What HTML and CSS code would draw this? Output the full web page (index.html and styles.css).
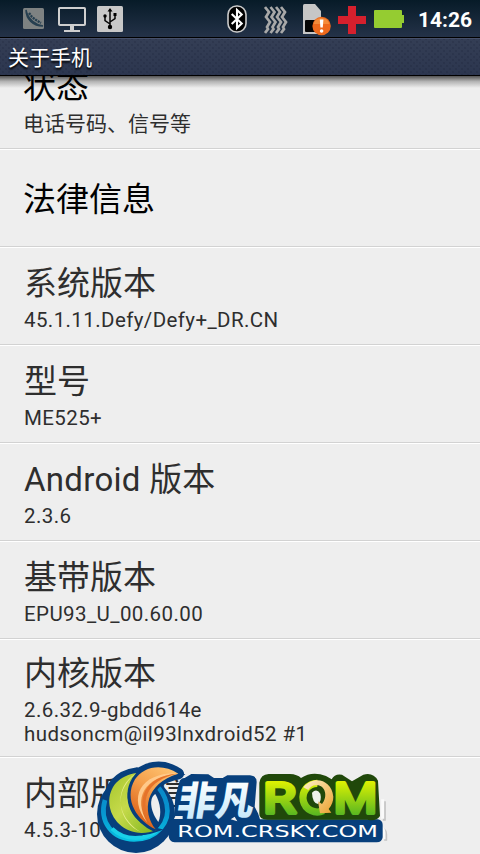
FILE: index.html
```html
<!DOCTYPE html>
<html lang="zh-CN">
<head>
  <meta charset="UTF-8" />
  <meta name="viewport" content="width=device-width, initial-scale=1" />
  <title>关于手机</title>
  <link rel="stylesheet" href="styles.css">
</head>
<body>
  <div class="status-bar">
    <div class="status-left">
      <svg class="icon-app" width="21" height="21" viewBox="0 0 21 21">
        <rect width="21" height="21" rx="1.5" fill="#7e8282"/>
        <path d="M3 2C3 11 10 18 20 18C13 17 5 12 3 2Z" fill="#263f50" stroke="#263f50" stroke-width="1.500"/>
        <path d="M6 5l3 4 4 3 5 3" stroke="#263f50" stroke-width="2.400" stroke-dasharray="2.200 .8" fill="none"/>
      </svg>
      <svg class="icon-screen" width="28" height="26" viewBox="0 0 28 26">
        <rect x="1" y="1" width="26" height="17" rx=".8" fill="none" stroke="#cfcfcf" stroke-width="2"/>
        <path d="M12 18h4v5h6v2H6v-2h6z" fill="#cfcfcf"/>
      </svg>
      <svg class="icon-usb" width="26" height="26" viewBox="0 0 26 26">
        <rect width="26" height="26" rx="1.500" fill="#c8c8c8"/>
        <path d="M13 3v18M13 18L8 14.500V10M13 16l5-3.500V9" stroke="#050505" stroke-width="1.500" fill="none"/>
        <path d="M10.500 5.500L13 2l2.500 3.500z"/>
        <circle cx="13" cy="21" r="2.200"/>
        <circle cx="8" cy="10" r="1.700"/>
        <rect x="16.500" y="7" width="3" height="3"/>
      </svg>
    </div>
    <div class="status-right">
      <svg class="icon-bt" width="20" height="28" viewBox="0 0 20 28">
        <rect x="1" y="1" width="18" height="26" rx="8.500" fill="#000" stroke="#cbcbcb" stroke-width="1.600"/>
        <path d="M4.700 9l10 9.500-4.700 4.500V5l4.700 4.500-10 9.500" fill="none" stroke="#fff" stroke-width="2.100"/>
      </svg>
      <svg class="icon-vibrate" width="24" height="28" viewBox="0 0 24 28">
        <g fill="none" stroke="#a8a8a8" stroke-width="2.700">
          <path d="M1 1l4 5-3 5 4 5-3 5 1 2-3 4"/>
          <path d="M6.500 1l4 5-3 5 4 5-3 5 1 2-3 4"/>
          <path d="M12 1l4 5-3 5 4 5-3 5 1 2-3 4"/>
          <path d="M17 1l4 5-3 5 4 5-3 5 1 2-3 4"/>
        </g>
      </svg>
      <svg class="icon-sim" width="28" height="32" viewBox="0 0 28 32">
        <path d="M0 1.500Q0 0 1.500 0H12l6 7v23H0z" fill="#c6c6c6"/>
        <rect x="2" y="16" width="13" height="12" rx="1" fill="#050505"/>
        <circle cx="18.600" cy="22" r="9.200" fill="#ee691c"/>
        <path d="M10.500 20a8.300 8.300 0 0 1 16 0z" fill="#f58b39"/>
        <path d="M16.800 15.500h3.600l-.6 8h-2.400z" fill="#fff"/>
        <circle cx="18.600" cy="27" r="1.800" fill="#fff"/>
      </svg>
      <svg class="icon-plus" width="28" height="28" viewBox="0 0 28 28">
        <path d="M10 0h8v10h10v8H18v10h-8V18H0v-8h10z" fill="#d6202d"/>
      </svg>
      <svg class="icon-battery" width="30" height="18" viewBox="0 0 30 18">
        <path d="M1 0h26q1 0 1 1v4h2v8h-2v4q0 1-1 1H1q-1 0-1-1V1q0-1 1-1z" fill="#95cc31"/>
      </svg>
      <span class="clock">14:26</span>
    </div>
  </div>

  <div class="title-bar">关于手机</div>

  <div class="list">
    <div class="row row-first enabled">
      <div class="name">状态</div>
      <div class="summary cjk">电话号码、信号等</div>
    </div>
    <div class="row row-single enabled">
      <div class="name">法律信息</div>
    </div>
    <div class="row">
      <div class="name">系统版本</div>
      <div class="summary">45.1.11.Defy/Defy+_DR.CN</div>
    </div>
    <div class="row">
      <div class="name">型号</div>
      <div class="summary">ME525+</div>
    </div>
    <div class="row">
      <div class="name"><span class="latin">Android </span>版本</div>
      <div class="summary">2.3.6</div>
    </div>
    <div class="row">
      <div class="name">基带版本</div>
      <div class="summary">EPU93_U_00.60.00</div>
    </div>
    <div class="row row-tall">
      <div class="name">内核版本</div>
      <div class="summary">2.6.32.9-gbdd614e<br>hudsoncm@il93lnxdroid52 #1</div>
    </div>
    <div class="row">
      <div class="name">内部版本信息</div>
      <div class="summary">4.5.3-10</div>
    </div>
  </div>

  <svg class="watermark" width="310" height="104" viewBox="0 0 930 312">
    <defs>
      <linearGradient id="green" x1="0" y1="0" x2="1" y2="1">
        <stop offset="0" stop-color="#a5c62c"/>
        <stop offset=".45" stop-color="#c6da4b"/>
        <stop offset="1" stop-color="#7fb51c"/>
      </linearGradient>
      <linearGradient id="orange" x1=".9" y1="0" x2=".4" y2="1">
        <stop offset="0" stop-color="#ffc675"/>
        <stop offset=".45" stop-color="#f5a04c"/>
        <stop offset="1" stop-color="#d95f18"/>
      </linearGradient>
      <linearGradient id="cyan" x1="0" y1="0" x2="0" y2="1">
        <stop offset="0" stop-color="#0a86c8"/>
        <stop offset=".5" stop-color="#0795d0"/>
        <stop offset="1" stop-color="#08c0e2"/>
      </linearGradient>
      <linearGradient id="ice" x1="0" y1="0" x2="0" y2="1">
        <stop offset=".2" stop-color="#fff"/>
        <stop offset="1" stop-color="#bde4fa"/>
      </linearGradient>
      <linearGradient id="lime" gradientUnits="userSpaceOnUse" x1="0" y1="88" x2="0" y2="198">
        <stop offset="0" stop-color="#e6f500"/>
        <stop offset="1" stop-color="#55b522"/>
      </linearGradient>
      <linearGradient id="gold" x1="0" y1="0" x2="1" y2="1">
        <stop offset="0" stop-color="#fff1c7"/>
        <stop offset="1" stop-color="#eba12f"/>
      </linearGradient>
    </defs>
    <!-- pale marks showing past the right edge of the logo -->
    <path d="M883 154v58M870 241q17-6 17 11v20" stroke="#c4c4c4" stroke-width="9" fill="none"/>
    <path d="M878 148v58M866 236q16-5 16 12v20" stroke="#fafafa" stroke-width="9" fill="none"/>
    <!-- emblem -->
    <circle cx="138" cy="192" r="117" fill="#073f7c"/>
    <g fill="#073f7c" stroke="#073f7c" stroke-width="34" stroke-linejoin="round">
      <path d="M140 69C88 76 52 112 58 165L130 160Z"/>
      <path d="M265 71C215 38 160 50 135 88L150 150Q180 90 265 71Z"/>
    </g>
    <path d="M45 150C26 216 68 268 132 268C202 268 242 216 230 162C224 136 212 118 198 106" fill="none" stroke="url(#cyan)" stroke-width="14"/>
    <path d="M66 236C88 258 112 264 136 264C162 264 188 254 205 238" fill="none" stroke="#19d0e8" stroke-width="12"/>
    <path d="M140 69C88 76 56 110 58 160C62 220 125 270 200 240C132 225 78 150 140 69Z" fill="url(#green)" stroke="#073f7c" stroke-width="12" paint-order="stroke"/>
    <path d="M137 71C74 110 74 198 152 246C90 218 62 130 137 71Z" fill="#e8ee8c"/>
    <path d="M130 84C86 144 104 210 170 246C108 212 84 150 130 84Z" fill="#92bb25"/>
    <path d="M265 71C215 38 160 50 135 88C98 150 145 215 197 238C155 185 165 100 265 71Z" fill="url(#orange)" stroke="#073f7c" stroke-width="18" paint-order="stroke"/>
    <path d="M263 70C155 66 110 140 172 218C130 145 160 82 263 70Z" fill="#ffc98a"/>
    <path d="M263 71C165 76 126 150 188 230C142 155 170 90 263 71Z" fill="#e5732a"/>
    <path d="M196 132C178 142 178 180 205 216C215 192 212 160 196 132Z" fill="#eee"/>
    <!-- dark backing of the wordmark -->
    <path fill="#073f7c" d="M252 206L256 140 268 96Q271 85 284 84L304 72 355 73 372 84H398L412 76 480 76Q500 78 500 96L494 170 504 190 510 208H864Q878 212 878 224V262Q876 278 858 277H254Q234 276 236 250V218Q240 207 252 206Z"/>
    <path fill="#eee" d="M256 198h22v9h-26zM422 208l12-8 8 14z"/>
    <g class="hanzi" fill="url(#ice)" transform="skewX(-9)">
      <text x="288" y="194" textLength="230" lengthAdjust="spacingAndGlyphs">非凡</text>
    </g>
    <path d="M508 98Q512 73 536 72H600Q622 73 633 84Q666 62 708 78L725 88Q734 70 756 74L786 94L820 74Q850 66 864 92L870 198Q858 216 832 209H538Q506 211 508 190Z" fill="#20480a"/>
    <g class="rom" fill="url(#lime)" stroke="url(#lime)">
      <text x="520" y="190" textLength="98" lengthAdjust="spacingAndGlyphs">R</text>
      <text x="731" y="190" textLength="130" lengthAdjust="spacingAndGlyphs">M</text>
    </g>
    <circle cx="678" cy="143" r="38" fill="#20480a"/>
    <path d="M666 128q14-14 25 3 5 20-7 31-17-3-18-34z" fill="#eef1e9"/>
    <path d="M700 182A43 43 0 1 1 682 100" fill="none" stroke="url(#lime)" stroke-width="22"/>
    <path d="M640 112C670 75 725 88 730 140Q730 160 716 177L724 188L690 190L684 154L696 162C716 138 704 104 679 106Q665 104 655 120Z" fill="url(#gold)"/>
    <text class="site" x="262" y="260" textLength="602" lengthAdjust="spacingAndGlyphs" fill="#fff">ROM.CRSKY.COM</text>
  </svg>
</body>
</html>
```
FILE: styles.css
```css
body {
  margin: 0;
  width: 480px;
  height: 854px;
  overflow: hidden;
  background: #eee;
  font-family: Roboto, "Noto Sans CJK SC", sans-serif;
  position: relative;
}

svg {
  display: block;
  flex: none;
}

.status-bar {
  display: flex;
  justify-content: space-between;
  box-sizing: border-box;
  height: 38px;
  padding: 0 9px 0 23px;
  background: linear-gradient(#071b28, #243248);
  border-bottom: 1px solid #000;
}

.status-left,
.status-right {
  display: flex;
  align-items: flex-start;
}

.icon-app {
  margin-top: 8px;
}

.icon-screen {
  margin: 7px 11px 0 14px;
}

.icon-usb {
  margin-top: 6px;
}

.icon-bt {
  margin-top: 5px;
}

.icon-vibrate {
  margin: 6px 15px 0 17px;
}

.icon-sim {
  margin-top: 4px;
}

.icon-plus {
  margin: 6px 8px 0 7px;
}

.icon-battery {
  margin-top: 10px;
}

.clock {
  width: 53px;
  margin-left: 14px;
  line-height: 40px;
  font-size: 21px;
  font-weight: bold;
  color: #fff;
  white-space: nowrap;
}

.title-bar {
  box-sizing: border-box;
  height: 38px;
  padding-left: 8px;
  border-top: 1px solid #46506a;
  border-bottom: 1px solid #000;
  background:
    radial-gradient(circle, rgba(25, 32, 54, .22) 1px, transparent 1.500px) 0 0 / 6px 6px,
    radial-gradient(circle, rgba(25, 32, 54, .22) 1px, transparent 1.500px) 3px 3px / 6px 6px,
    linear-gradient(#343e55, #2c364f);
  font-size: 21px;
  line-height: 38px;
  color: #fff;
  text-shadow: 0 2px 2px #000;
}

.list {
  position: relative;
  height: 778px;
  overflow: hidden;
}

/* shadow that the title bar casts on the list */
.list::before {
  content: "";
  position: absolute;
  top: 0;
  left: 0;
  right: 0;
  height: 12px;
  background: linear-gradient(rgba(0, 0, 0, .65), rgba(0, 0, 0, .25) 45%, transparent);
}

.row {
  box-sizing: border-box;
  height: 98px;
  padding: 14px 24px 0;
  border-top: 1px solid #fff;
  border-bottom: 1px solid #d2d2d2;
  color: #2e2e2e;
}

.row-first {
  margin-top: -25px;
  padding-top: 13px;
}

.row-single {
  padding-top: 28px;
}

.row-tall {
  height: 118px;
  padding-top: 12px;
}

.name {
  height: 44px;
  font-size: 33px;
  line-height: 44px;
  white-space: nowrap;
}

.latin {
  letter-spacing: .3px;
}

.summary {
  font-size: 20.500px;
  line-height: 24px;
  padding-top: 2px;
  letter-spacing: .4px;
  white-space: nowrap;
}

.enabled {
  padding-left: 23px;
}

.enabled .name {
  color: #000;
}

.summary.cjk {
  padding-top: 3px;
  font-size: 21px;
  letter-spacing: 0;
}

.watermark {
  position: absolute;
  left: 90px;
  top: 750px;
}

.hanzi {
  font-family: "Noto Sans CJK SC", sans-serif;
  font-size: 118px;
  font-weight: 900;
}

.rom {
  font-family: Roboto, sans-serif;
  font-size: 130px;
  font-weight: normal;
  stroke-width: 12px;
  stroke-linejoin: round;
}

.site {
  font-family: "DejaVu Sans", sans-serif;
  font-size: 45px;
}
```
